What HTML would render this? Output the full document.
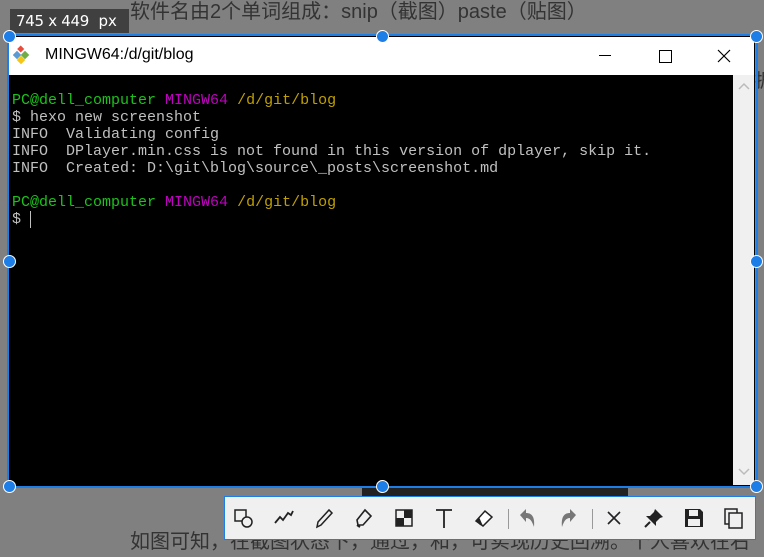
<!DOCTYPE html>
<html><head><style>
body{margin:0;width:764px;height:557px;background:#808080;position:relative;overflow:hidden;font-family:"Liberation Sans","Noto Sans CJK SC",sans-serif}
.abs{position:absolute}
.term{font-family:"Liberation Mono","DejaVu Sans Mono",monospace;font-size:15px;line-height:17px;color:#c0c0c0;white-space:pre}
.g{color:#1dc21d}.m{color:#c000c0}.y{color:#c0a000}
.h{position:absolute;width:11px;height:11px;border-radius:50%;background:#1e7ee8;border:1px solid #fff;margin:-6.5px 0 0 -6.5px}
.tb svg{position:absolute;top:10px}
</style></head><body>
<div class="abs" style="left:130px;top:-5px;font-size:20px;color:#333">软件名由2个单词组成：snip（截图）paste（贴图）</div>
<div class="abs" style="left:755px;top:66px;font-size:19px;color:#333">据</div>
<div class="abs" style="left:10px;top:9px;width:119px;height:24px;background:#404040;color:#fff;font-size:15px;line-height:24px;padding-left:6px;box-sizing:border-box;font-family:'DejaVu Sans',sans-serif;white-space:pre"><span style="letter-spacing:-0.3px">745 x 449</span>  px</div>
<div class="abs" style="left:9px;top:36px;width:746px;height:450px;background:#000"></div>
<div class="abs" style="left:9px;top:37px;width:745px;height:38px;background:#fff"></div>
<svg class="abs" style="left:13px;top:45px" width="20" height="20"><rect x="5" y="1" width="5" height="5" fill="#e74c3c" transform="rotate(45 7 4)"/><rect x="1" y="7" width="6" height="6" fill="#5b9bd5" transform="rotate(45 4 10)"/><rect x="9" y="7" width="6" height="6" fill="#70ad47" transform="rotate(45 12 10)"/><rect x="5" y="12" width="6" height="6" fill="#f5c518" transform="rotate(45 8 15)"/></svg>
<div class="abs" style="left:45px;top:46px;font-size:16px;color:#000">MINGW64:/d/git/blog</div>
<div class="abs" style="left:599px;top:55px;width:12px;height:1px;background:#000"></div>
<div class="abs" style="left:659px;top:50px;width:11px;height:11px;border:1px solid #000"></div>
<svg class="abs" style="left:717px;top:49px" width="14" height="14"><path d="M1 1L13 13M13 1L1 13" stroke="#000" stroke-width="1.2"/></svg>
<div class="abs" style="left:733px;top:75px;width:21px;height:410px;background:#f0f0f0"></div>
<svg class="abs" style="left:738px;top:82px" width="12" height="8"><path d="M1 7L6 2L11 7" stroke="#bbb" fill="none" stroke-width="1.5"/></svg>
<svg class="abs" style="left:738px;top:468px" width="12" height="8"><path d="M1 1L6 6L11 1" stroke="#bbb" fill="none" stroke-width="1.5"/></svg>
<div class="abs term" style="left:12px;top:92px"><span class="g">PC@dell_computer</span> <span class="m">MINGW64</span> <span class="y">/d/git/blog</span>
$ hexo new screenshot
INFO  Validating config
INFO  DPlayer.min.css is not found in this version of dplayer, skip it.
INFO  Created: D:\git\blog\source\_posts\screenshot.md

<span class="g">PC@dell_computer</span> <span class="m">MINGW64</span> <span class="y">/d/git/blog</span>
$ <span style="border-left:1px solid #c0c0c0"> </span></div>
<div class="abs" style="left:7px;top:34px;width:747px;height:450px;border:2px solid #1e7ee8"></div>
<div class="abs" style="left:362px;top:488px;width:266px;height:8px;background:#222"></div>
<div class="h" style="left:9px;top:36px"></div><div class="h" style="left:382px;top:36px"></div><div class="h" style="left:756px;top:36px"></div>
<div class="h" style="left:9px;top:261px"></div><div class="h" style="left:756px;top:261px"></div>
<div class="h" style="left:9px;top:486px"></div><div class="h" style="left:382px;top:486px"></div><div class="h" style="left:756px;top:486px"></div>
<div class="abs" style="left:130px;top:525px;font-size:20px;color:#333;white-space:nowrap">如图可知，在截图状态下，通过，和，可实现历史回溯。个人喜欢在右</div>
<div class="abs tb" style="left:224px;top:496px;width:532px;height:44px;background:#f0f0f0;border:1px solid #1e7ee8;box-sizing:border-box">
<svg style="left:8px" width="22" height="22"><rect x="2" y="3" width="11" height="11" fill="none" stroke="#222" stroke-width="1.5"/><circle cx="14" cy="15" r="5" fill="#f0f0f0" stroke="#222" stroke-width="1.5"/></svg>
<svg style="left:48px" width="22" height="22"><path d="M2 16L7 10L10 13L15 6L18 8L20 4" stroke="#222" fill="none" stroke-width="1.8"/></svg>
<svg style="left:88px" width="22" height="22"><path d="M4 20L5 15L16 3L19 6L8 18Z" stroke="#222" fill="none" stroke-width="1.5"/></svg>
<svg style="left:128px" width="22" height="22"><path d="M5 18L4 13L12 3L18 9L10 18Z" stroke="#222" fill="none" stroke-width="1.6"/><path d="M4 18L7 20" stroke="#222" stroke-width="2"/></svg>
<svg style="left:168px" width="22" height="22"><rect x="3" y="3" width="16" height="16" fill="none" stroke="#222" stroke-width="1.5"/><rect x="3" y="11" width="8" height="8" fill="#222"/><rect x="11" y="3" width="8" height="8" fill="#222"/></svg>
<svg style="left:208px" width="22" height="22"><path d="M3 3H19M11 3V21" stroke="#222" stroke-width="1.8"/></svg>
<svg style="left:248px" width="22" height="22"><path d="M3 14L12 4L19 10L10 19Z" fill="#fff" stroke="#222" stroke-width="1.5"/><path d="M3 14L7 18L10 19L6 10Z" fill="#222"/></svg>
<div class="abs" style="left:283px;top:12px;width:1px;height:20px;background:#999"></div>
<svg style="left:292px" width="22" height="22"><path d="M3 8L9 2V6C15 6 18 10 17 20C15 14 13 11 9 11V15Z" fill="#777"/></svg>
<svg style="left:332px" width="22" height="22"><path d="M19 8L13 2V6C7 6 4 10 5 20C7 14 9 11 13 11V15Z" fill="#777"/></svg>
<div class="abs" style="left:367px;top:12px;width:1px;height:20px;background:#999"></div>
<svg style="left:378px" width="22" height="22"><path d="M5 5L17 17M17 5L5 17" stroke="#222" stroke-width="1.6"/></svg>
<svg style="left:418px" width="22" height="22"><path d="M12 2L20 10L17 11L13 15L13 19L3 9L7 9L11 5Z" fill="#222"/><path d="M7 15L2 20" stroke="#222" stroke-width="2"/></svg>
<svg style="left:458px" width="22" height="22"><path d="M2 2H17L20 5V20H2Z" fill="#222"/><rect x="6" y="3" width="9" height="6" fill="#f0f0f0"/><rect x="5" y="12" width="12" height="7" fill="#f0f0f0"/></svg>
<svg style="left:498px" width="22" height="22"><rect x="2" y="2" width="12" height="15" fill="none" stroke="#222" stroke-width="1.5"/><rect x="6" y="6" width="13" height="15" fill="#f0f0f0" stroke="#222" stroke-width="1.5"/></svg>
</div>
</body></html>
